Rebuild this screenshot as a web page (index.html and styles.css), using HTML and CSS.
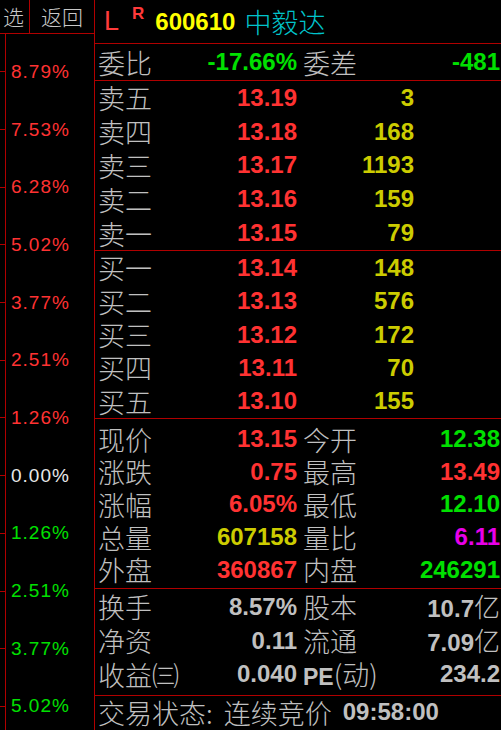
FILE: index.html
```html
<!DOCTYPE html>
<html lang="zh-CN">
<head>
<meta charset="utf-8">
<title>600610 中毅达</title>
<link rel="stylesheet" href="styles.css">
</head>
<body>
<div class="screen">
  <aside class="side">
    <div class="side-head">
      <div class="btn btn-sel">选</div>
      <div class="btn btn-back">返回</div>
    </div>
    <div class="axis">
      <div class="tick up"><span>8.79%</span></div>
      <div class="tick up"><span>7.53%</span></div>
      <div class="tick up"><span>6.28%</span></div>
      <div class="tick up"><span>5.02%</span></div>
      <div class="tick up"><span>3.77%</span></div>
      <div class="tick up"><span>2.51%</span></div>
      <div class="tick up"><span>1.26%</span></div>
      <div class="tick flat"><span>0.00%</span></div>
      <div class="tick down"><span>1.26%</span></div>
      <div class="tick down"><span>2.51%</span></div>
      <div class="tick down"><span>3.77%</span></div>
      <div class="tick down"><span>5.02%</span></div>
    </div>
  </aside>

  <main class="panel">
    <header class="title">
      <span class="flag-l">L</span>
      <span class="flag-r">R</span>
      <span class="code">600610</span>
      <span class="name">中毅达</span>
    </header>

    <section class="sec sec-ratio">
      <div class="row">
        <div class="cell a"><span class="lbl">委比</span><span class="num green">-17.66%</span></div>
        <div class="cell b"><span class="lbl">委差</span><span class="num green">-481</span></div>
      </div>
    </section>

    <section class="sec sec-book">
      <div class="row"><div class="cell a"><span class="lbl">卖五</span><span class="num red">13.19</span></div><div class="cell vol"><span class="num yellow">3</span></div></div>
      <div class="row"><div class="cell a"><span class="lbl">卖四</span><span class="num red">13.18</span></div><div class="cell vol"><span class="num yellow">168</span></div></div>
      <div class="row"><div class="cell a"><span class="lbl">卖三</span><span class="num red">13.17</span></div><div class="cell vol"><span class="num yellow">1193</span></div></div>
      <div class="row"><div class="cell a"><span class="lbl">卖二</span><span class="num red">13.16</span></div><div class="cell vol"><span class="num yellow">159</span></div></div>
      <div class="row"><div class="cell a"><span class="lbl">卖一</span><span class="num red">13.15</span></div><div class="cell vol"><span class="num yellow">79</span></div></div>
    </section>

    <section class="sec sec-book sec-buy">
      <div class="row"><div class="cell a"><span class="lbl">买一</span><span class="num red">13.14</span></div><div class="cell vol"><span class="num yellow">148</span></div></div>
      <div class="row"><div class="cell a"><span class="lbl">买二</span><span class="num red">13.13</span></div><div class="cell vol"><span class="num yellow">576</span></div></div>
      <div class="row"><div class="cell a"><span class="lbl">买三</span><span class="num red">13.12</span></div><div class="cell vol"><span class="num yellow">172</span></div></div>
      <div class="row"><div class="cell a"><span class="lbl">买四</span><span class="num red">13.11</span></div><div class="cell vol"><span class="num yellow">70</span></div></div>
      <div class="row"><div class="cell a"><span class="lbl">买五</span><span class="num red">13.10</span></div><div class="cell vol"><span class="num yellow">155</span></div></div>
    </section>

    <section class="sec sec-stats">
      <div class="row">
        <div class="cell a"><span class="lbl">现价</span><span class="num red">13.15</span></div>
        <div class="cell b"><span class="lbl">今开</span><span class="num green">12.38</span></div>
      </div>
      <div class="row">
        <div class="cell a"><span class="lbl">涨跌</span><span class="num red">0.75</span></div>
        <div class="cell b"><span class="lbl">最高</span><span class="num red">13.49</span></div>
      </div>
      <div class="row">
        <div class="cell a"><span class="lbl">涨幅</span><span class="num red">6.05%</span></div>
        <div class="cell b"><span class="lbl">最低</span><span class="num green">12.10</span></div>
      </div>
      <div class="row">
        <div class="cell a"><span class="lbl">总量</span><span class="num yellow">607158</span></div>
        <div class="cell b"><span class="lbl">量比</span><span class="num magenta">6.11</span></div>
      </div>
      <div class="row">
        <div class="cell a"><span class="lbl">外盘</span><span class="num red">360867</span></div>
        <div class="cell b"><span class="lbl">内盘</span><span class="num green">246291</span></div>
      </div>
    </section>

    <section class="sec sec-info">
      <div class="row">
        <div class="cell a"><span class="lbl">换手</span><span class="num gray">8.57%</span></div>
        <div class="cell b"><span class="lbl">股本</span><span class="num gray">10.7<span class="unit">亿</span></span></div>
      </div>
      <div class="row">
        <div class="cell a"><span class="lbl">净资</span><span class="num gray">0.11</span></div>
        <div class="cell b"><span class="lbl">流通</span><span class="num gray">7.09<span class="unit">亿</span></span></div>
      </div>
      <div class="row">
        <div class="cell a"><span class="lbl">收益㈢</span><span class="num gray">0.040</span></div>
        <div class="cell b"><span class="lbl"><span class="pe">PE</span>(动)</span><span class="num gray">234.2</span></div>
      </div>
    </section>

    <footer class="status">
      <span class="lbl">交易状态:</span>
      <span class="lbl state">连续竞价</span>
      <span class="num gray time">09:58:00</span>
    </footer>
  </main>
</div>
</body>
</html>
```

FILE: styles.css
```css
html, body {
  margin: 0;
  padding: 0;
  background: #000;
}

body {
  width: 501px;
  height: 730px;
  overflow: hidden;
  font-family: "Noto Sans CJK SC", "Liberation Sans", sans-serif;
  color: #c0c0c0;
}

.screen {
  display: flex;
  height: 730px;
}

/* ---------- left axis column ---------- */
.side {
  width: 94px;
  flex: none;
  border-right: 1px solid #b00000;
  display: flex;
  flex-direction: column;
}

.side-head {
  height: 33px;
  flex: none;
  border-bottom: 1px solid #b00000;
  display: flex;
}

.btn {
  display: flex;
  align-items: center;
  justify-content: center;
  font-size: 21px;
  line-height: 1;
  color: #c8c8c8;
  font-weight: 300;
}

.btn-sel {
  width: 30px;
  box-sizing: border-box;
  border-right: 1px solid #b00000;
  padding-right: 2px;
}

.btn-back {
  flex: 1;
}

.axis {
  flex: 1;
  overflow: hidden;
  padding-top: 9px;
  background: linear-gradient(#b00000, #b00000) 5px 0 / 1px 100% no-repeat;
}

.tick {
  height: 57.7px;
  display: flex;
  align-items: center;
  font-family: "Liberation Sans", Arial, sans-serif;
  font-size: 19px;
  letter-spacing: 1px;
}

.tick::before {
  content: "";
  width: 5px;
  height: 1px;
  background: #b00000;
  margin-right: 6px;
}

.tick.up { color: #ff3232; }
.tick.flat { color: #e8e8e8; }
.tick.down { color: #00e000; }

/* ---------- right quote panel ---------- */
.panel {
  flex: 1;
  display: flex;
  flex-direction: column;
  min-width: 0;
}

.title {
  height: 43px;
  flex: none;
  border-bottom: 1px solid #b00000;
  display: flex;
  align-items: center;
  padding-left: 9px;
  line-height: 1;
}

.flag-l {
  font-family: "Liberation Sans", Arial, sans-serif;
  font-size: 27px;
  color: #ff3a3a;
}

.flag-r {
  align-self: flex-start;
  margin-top: 5px;
  margin-left: 13px;
  font-family: "Liberation Sans", Arial, sans-serif;
  font-weight: bold;
  font-size: 17px;
  color: #ff3a3a;
}

.code {
  margin-left: 11px;
  font-family: "Liberation Sans", Arial, sans-serif;
  font-weight: bold;
  font-size: 24px;
  color: #ffff00;
}

.name {
  margin-left: 9px;
  font-size: 27px;
  color: #00c4cc;
  font-weight: 300;
}

.sec {
  flex: none;
  display: flex;
  flex-direction: column;
  border-bottom: 1px solid #b00000;
  box-sizing: border-box;
}

.sec-ratio { height: 37px; }
.sec-book { height: 170px; }
.sec-buy { height: 168px; }
.sec-stats { height: 170px; padding-top: 4px; padding-bottom: 2px; }
.sec-info { height: 107px; padding-top: 1px; padding-bottom: 4px; }

.row {
  flex: 1;
  display: flex;
  align-items: center;
  padding-left: 3px;
}

.cell {
  display: flex;
  align-items: center;
  justify-content: space-between;
}

.cell.a { width: 199px; }
.cell.b { width: 197px; margin-left: 6px; }
.cell.vol { width: 111px; margin-left: 6px; justify-content: flex-end; }

.lbl {
  font-family: "Noto Sans CJK SC", sans-serif;
  font-size: 27px;
  line-height: 1;
  color: #c0c0c0;
  font-weight: 300;
  white-space: nowrap;
}

.pe {
  font-family: "Liberation Sans", Arial, sans-serif;
  font-weight: bold;
  font-size: 23px;
}

.num {
  font-family: "Liberation Sans", Arial, sans-serif;
  font-weight: bold;
  font-size: 24px;
  line-height: 1;
  white-space: nowrap;
}

.unit {
  font-family: "Noto Sans CJK SC", sans-serif;
  font-weight: 300;
  font-size: 26px;
}

.red { color: #ff3232; }
.green { color: #00e000; }
.yellow { color: #cccc00; }
.magenta { color: #e800e8; }
.gray { color: #c0c0c0; }

.status {
  flex: 1;
  display: flex;
  align-items: center;
  padding-left: 3px;
  padding-bottom: 2px;
}

.state { margin-left: 11px; }
.time { margin-left: 11px; }
```
